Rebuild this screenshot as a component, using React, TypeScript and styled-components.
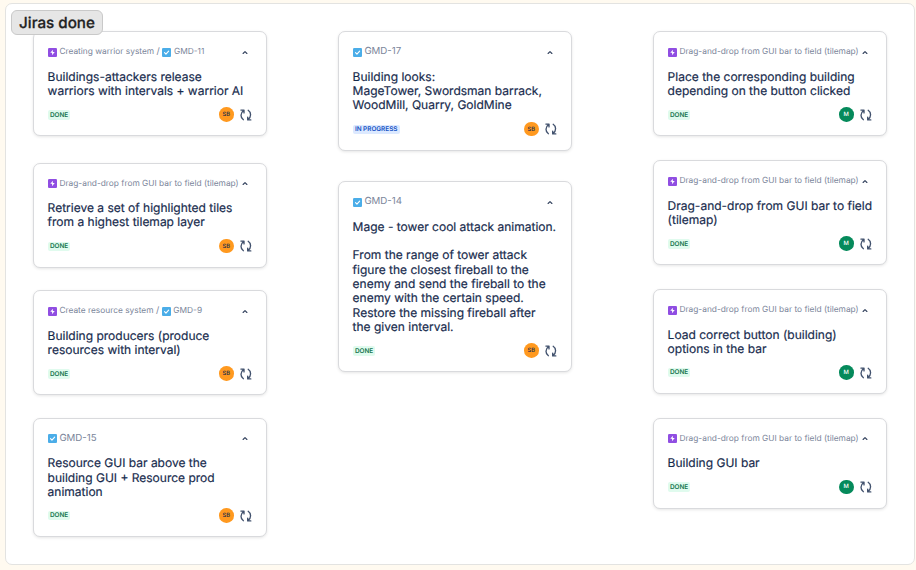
import React from "react";
import styled, { createGlobalStyle } from "styled-components";

const GlobalStyle = createGlobalStyle`
  *, *::before, *::after { box-sizing: border-box; }
  body {
    margin: 0;
    background: #fffaf0;
    font-family: Inter, "Liberation Sans", sans-serif;
    text-rendering: geometricPrecision;
  }
  svg { flex: none; }
`;

const Page = styled.div`
  width: 916px;
  height: 570px;
  padding: 3px 1px 4px 5px;
  overflow: hidden;
  background: #fffaf0;
`;

const Board = styled.main`
  position: relative;
  height: 562px;
  display: grid;
  grid-template-columns: 234px 234px 234px;
  column-gap: 71px;
  align-items: start;
  padding: 27.45px 0 0 27px;
  background: #fff;
  border: 1px solid #e3e3e1;
  border-radius: 7px;
`;

const BoardLabel = styled.h1`
  position: absolute;
  z-index: 1;
  top: 6px;
  left: 5px;
  width: 92px;
  height: 24.5px;
  margin: 0;
  border: 1px solid #c9c9c9;
  border-radius: 6px;
  background: #e6e6e6;
  color: #222;
  font-size: 15.2px;
  font-weight: 500;
  -webkit-text-stroke: 0.25px #222;
  line-height: 23px;
  text-align: center;
  white-space: nowrap;
`;

const Column = styled.section<{ $shift?: number }>`
  display: flex;
  flex-direction: column;
  margin-left: ${(p) => p.$shift ?? 0}px;
  width: 234px;
`;

const Card = styled.article<{ $gap: number }>`
  margin-top: ${(p) => p.$gap}px;
  padding: 14px 14.5px 13.2px 13.6px;
  border: 1px solid #d9dadd;
  border-radius: 7px;
  background: #fff;
  box-shadow: 0 1px 3px rgba(0, 0, 0, 0.1);
`;

const Header = styled.header`
  display: flex;
  align-items: center;
  height: 12px;
  padding-right: 3.3px;
  color: #7a859a;
  white-space: nowrap;
`;

const Crumb = styled.span<{ $large?: boolean }>`
  margin-left: 2.8px;
  font-size: ${(p) => (p.$large ? 9.7 : 8.35)}px;
  line-height: 12px;
`;

const Slash = styled.span`
  margin: 0 2.4px;
  font-size: 9px;
  line-height: 12px;
`;

const Toggle = styled.span`
  display: flex;
  margin-left: auto;
`;

const Title = styled.p`
  margin: 11.4px 0 0;
  color: #172b4d;
  font-size: 12px;
  font-weight: 400;
  -webkit-text-stroke: 0.18px #172b4d;
  line-height: 14.33px;
  white-space: pre;
`;

const Footer = styled.footer`
  display: flex;
  align-items: center;
  height: 15px;
  margin-top: 8.8px;
`;

const Status = styled.span<{ $progress?: boolean }>`
  margin-top: 0.6px;
  padding: 0.3px 2.3px 0;
  border-radius: 2px;
  background: ${(p) => (p.$progress ? "#dce9ff" : "#e0fbee")};
  color: ${(p) => (p.$progress ? "#1552c4" : "#16754f")};
  font-size: 6.4px;
  font-weight: 600;
  line-height: 9px;
`;

const Avatar = styled.span<{ $green?: boolean }>`
  display: flex;
  align-items: center;
  justify-content: center;
  width: 14.6px;
  height: 14.6px;
  margin: 0 6px 0 auto;
  border-radius: 50%;
  background: ${(p) => (p.$green ? "#058a5b" : "#ff991f")};
  color: ${(p) => (p.$green ? "#fff" : "#172b4d")};
  font-size: 5.8px;
  font-weight: 500;
`;

const EpicIcon = () => (
  <svg width="9" height="9" viewBox="0 0 16 16">
    <rect width="16" height="16" rx="2" fill="#904ee2" />
    <path d="M8.8 3 4 8.6h3.4L7 13l5-5.8H8.5z" fill="#fff" />
  </svg>
);

const TaskIcon = () => (
  <svg width="9" height="9" viewBox="0 0 16 16">
    <rect width="16" height="16" rx="2" fill="#4bade8" />
    <path d="m4.5 8.2 2.5 2.6 4.8-5.2" fill="none" stroke="#fff" strokeWidth="2" strokeLinecap="round" strokeLinejoin="round" />
  </svg>
);

const ChevronIcon = () => (
  <svg width="6" height="5" viewBox="0 0 6 5">
    <path d="M1.1 3.5 3 1.6l1.9 1.9" fill="none" stroke="#34435f" strokeWidth="1.15" strokeLinecap="round" strokeLinejoin="round" />
  </svg>
);

const SyncIcon = () => (
  <svg width="12" height="12" viewBox="0 0 12 12" fill="none" stroke="#42526e" strokeWidth="1.35" strokeLinecap="round" strokeLinejoin="round">
    <path d="M3.4 10.7C.1 8.6.3 4 3.5 1.4M.9 1.1h3.1v2.8" />
    <path d="M8.2 1.3c3.3 2.1 3.1 6.7-.1 9.3M10.8 10.9H7.7V8.1" />
  </svg>
);

interface Issue {
  gap: number;
  epic?: string;
  issueKey?: string;
  title: string;
  progress?: boolean;
  owner: "SB" | "M";
}

const DRAG = "Drag-and-drop from GUI bar to field (tilemap)";

const columns: Issue[][] = [
  [
    { gap: 0, epic: "Creating warrior system", issueKey: "GMD-11", title: "Buildings-attackers release\nwarriors with intervals + warrior AI", owner: "SB" },
    { gap: 26.3, epic: DRAG, title: "Retrieve a set of highlighted tiles\nfrom a highest tilemap layer", owner: "SB" },
    { gap: 22.5, epic: "Create resource system", issueKey: "GMD-9", title: "Building producers (produce\nresources with interval)", owner: "SB" },
    { gap: 22.5, issueKey: "GMD-15", title: "Resource GUI bar above the\nbuilding GUI + Resource prod\nanimation", owner: "SB" },
  ],
  [
    { gap: 0, issueKey: "GMD-17", title: "Building looks:\nMageTower, Swordsman barrack,\nWoodMill, Quarry, GoldMine", progress: true, owner: "SB" },
    { gap: 30.6, issueKey: "GMD-14", title: "Mage - tower cool attack animation.\n\nFrom the range of tower attack\nfigure the closest fireball to the\nenemy and send the fireball to the\nenemy with the certain speed.\nRestore the missing fireball after\nthe given interval.", owner: "SB" },
  ],
  [
    { gap: 0, epic: DRAG, title: "Place the corresponding building\ndepending on the button clicked", owner: "M" },
    { gap: 23.9, epic: DRAG, title: "Drag-and-drop from GUI bar to field\n(tilemap)", owner: "M" },
    { gap: 23.8, epic: DRAG, title: "Load correct button (building)\noptions in the bar", owner: "M" },
    { gap: 23.6, epic: DRAG, title: "Building GUI bar", owner: "M" },
  ],
];

const IssueCard = ({ issue }: { issue: Issue }) => (
  <Card $gap={issue.gap}>
    <Header>
      {issue.epic && (
        <>
          <EpicIcon />
          <Crumb>{issue.epic}</Crumb>
        </>
      )}
      {issue.epic && issue.issueKey && <Slash>/</Slash>}
      {issue.issueKey && (
        <>
          <TaskIcon />
          <Crumb $large={!issue.epic}>{issue.issueKey}</Crumb>
        </>
      )}
      <Toggle>
        <ChevronIcon />
      </Toggle>
    </Header>
    <Title>{issue.title}</Title>
    <Footer>
      <Status $progress={issue.progress}>{issue.progress ? "IN PROGRESS" : "DONE"}</Status>
      <Avatar $green={issue.owner === "M"}>{issue.owner}</Avatar>
      <SyncIcon />
    </Footer>
  </Card>
);

export default function App() {
  return (
    <>
      <GlobalStyle />
      <Page>
        <Board>
          <BoardLabel>Jiras done</BoardLabel>
          {columns.map((issues, i) => (
            <Column key={i} $shift={i === 2 ? 10 : 0}>
              {issues.map((issue) => (
                <IssueCard key={issue.title} issue={issue} />
              ))}
            </Column>
          ))}
        </Board>
      </Page>
    </>
  );
}
